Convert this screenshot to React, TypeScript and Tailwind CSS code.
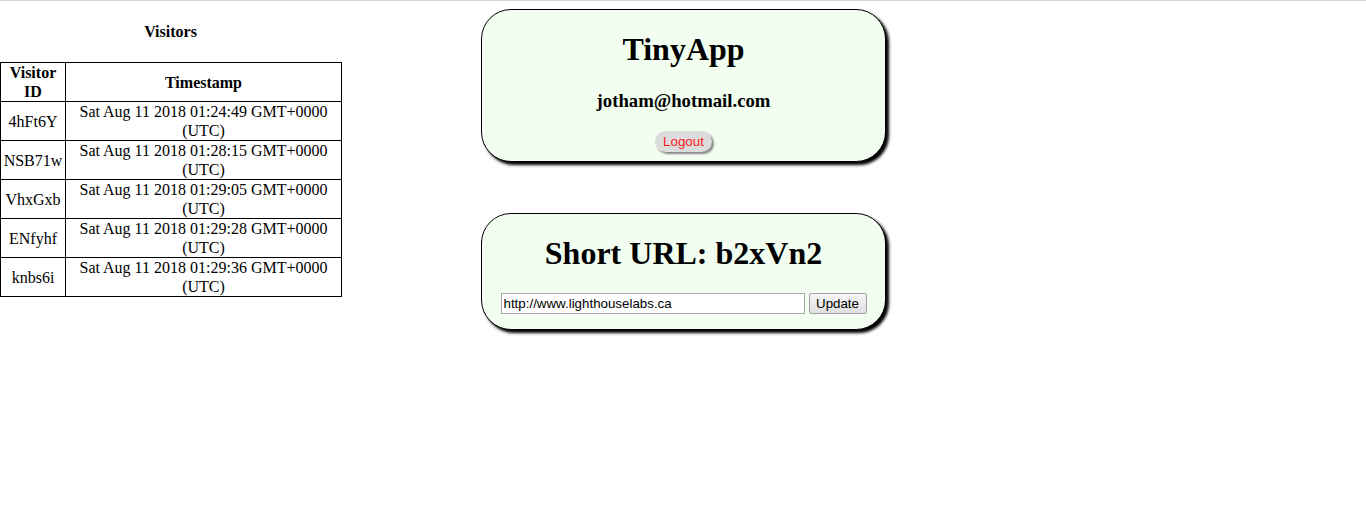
import React from 'react';

const visits = [
  { id: '4hFt6Y', time: 'Sat Aug 11 2018 01:24:49 GMT+0000 (UTC)' },
  { id: 'NSB71w', time: 'Sat Aug 11 2018 01:28:15 GMT+0000 (UTC)' },
  { id: 'VhxGxb', time: 'Sat Aug 11 2018 01:29:05 GMT+0000 (UTC)' },
  { id: 'ENfyhf', time: 'Sat Aug 11 2018 01:29:28 GMT+0000 (UTC)' },
  { id: 'knbs6i', time: 'Sat Aug 11 2018 01:29:36 GMT+0000 (UTC)' },
];

const serif = "font-['Liberation_Serif','Times_New_Roman',serif]";
const sans = "font-['Liberation_Sans',Arial,sans-serif]";

const VisitorsTable: React.FC = () => {
  return (
    <div className="w-[341px] shrink-0">
      <h4 className="mt-[21px] mb-[21px] text-center text-base font-bold leading-[19px]">Visitors</h4>
      <table className="w-[341px] table-fixed border-collapse border border-black text-base leading-[19px]">
        <colgroup>
          <col className="w-[65px]" />
          <col className="w-[276px]" />
        </colgroup>
        <thead>
          <tr>
            <th className="border border-black px-px py-0 text-center font-bold">Visitor ID</th>
            <th className="border border-black px-px py-0 text-center font-bold">Timestamp</th>
          </tr>
        </thead>
        <tbody>
          {visits.map((v) => (
            <tr key={v.id}>
              <td className="border border-black px-px py-0 text-center">{v.id}</td>
              <td className="border border-black px-px py-0 text-center">{v.time}</td>
            </tr>
          ))}
        </tbody>
      </table>
    </div>
  );
};

const App: React.FC = () => {
  return (
    <div className={`min-h-[528px] bg-white text-black ${serif}`}>
      <div className="h-px bg-[#d3d3d3]" />
      <div className="flex items-start">
        <VisitorsTable />
        <div className="ml-[140px] flex w-[405px] flex-col gap-[51px] pt-[8px]">
          <div className="h-[153px] rounded-[30px] border border-black bg-[#f2fff0] shadow-[3px_3px_3px_#000] flex flex-col items-center pt-[21px]">
            <h1 className="text-[32px] font-bold leading-[37px]">TinyApp</h1>
            <h3 className="mt-[22px] text-[18.72px] font-bold leading-[22px]">jotham@hotmail.com</h3>
            <button
              className={`mt-[19px] h-[21px] rounded-full bg-[#dcdcdc] px-[8px] text-[13.33px] leading-[21px] text-[#ff1a1a] shadow-[2px_2px_2px_#888] ${sans}`}
            >
              Logout
            </button>
          </div>
          <div className="h-[117px] rounded-[30px] border border-black bg-[#f2fff0] shadow-[3px_3px_3px_#000] flex flex-col items-center pt-[21px]">
            <h1 className="text-[32px] font-bold leading-[37px]">Short URL: b2xVn2</h1>
            <div className="mt-[21px] flex items-center gap-[4px]">
              <input
                defaultValue="http://www.lighthouselabs.ca"
                className={`h-[21px] w-[304px] border border-[#a9a9a9] bg-white px-[2px] text-[13.33px] text-black outline-none ${sans}`}
              />
              <button
                className={`h-[21px] w-[58px] rounded-[2px] border border-[#a0a0a0] bg-gradient-to-b from-[#f6f6f6] to-[#dedede] text-[13.33px] leading-[19px] text-black ${sans}`}
              >
                Update
              </button>
            </div>
          </div>
        </div>
      </div>
    </div>
  );
};

export default App;
